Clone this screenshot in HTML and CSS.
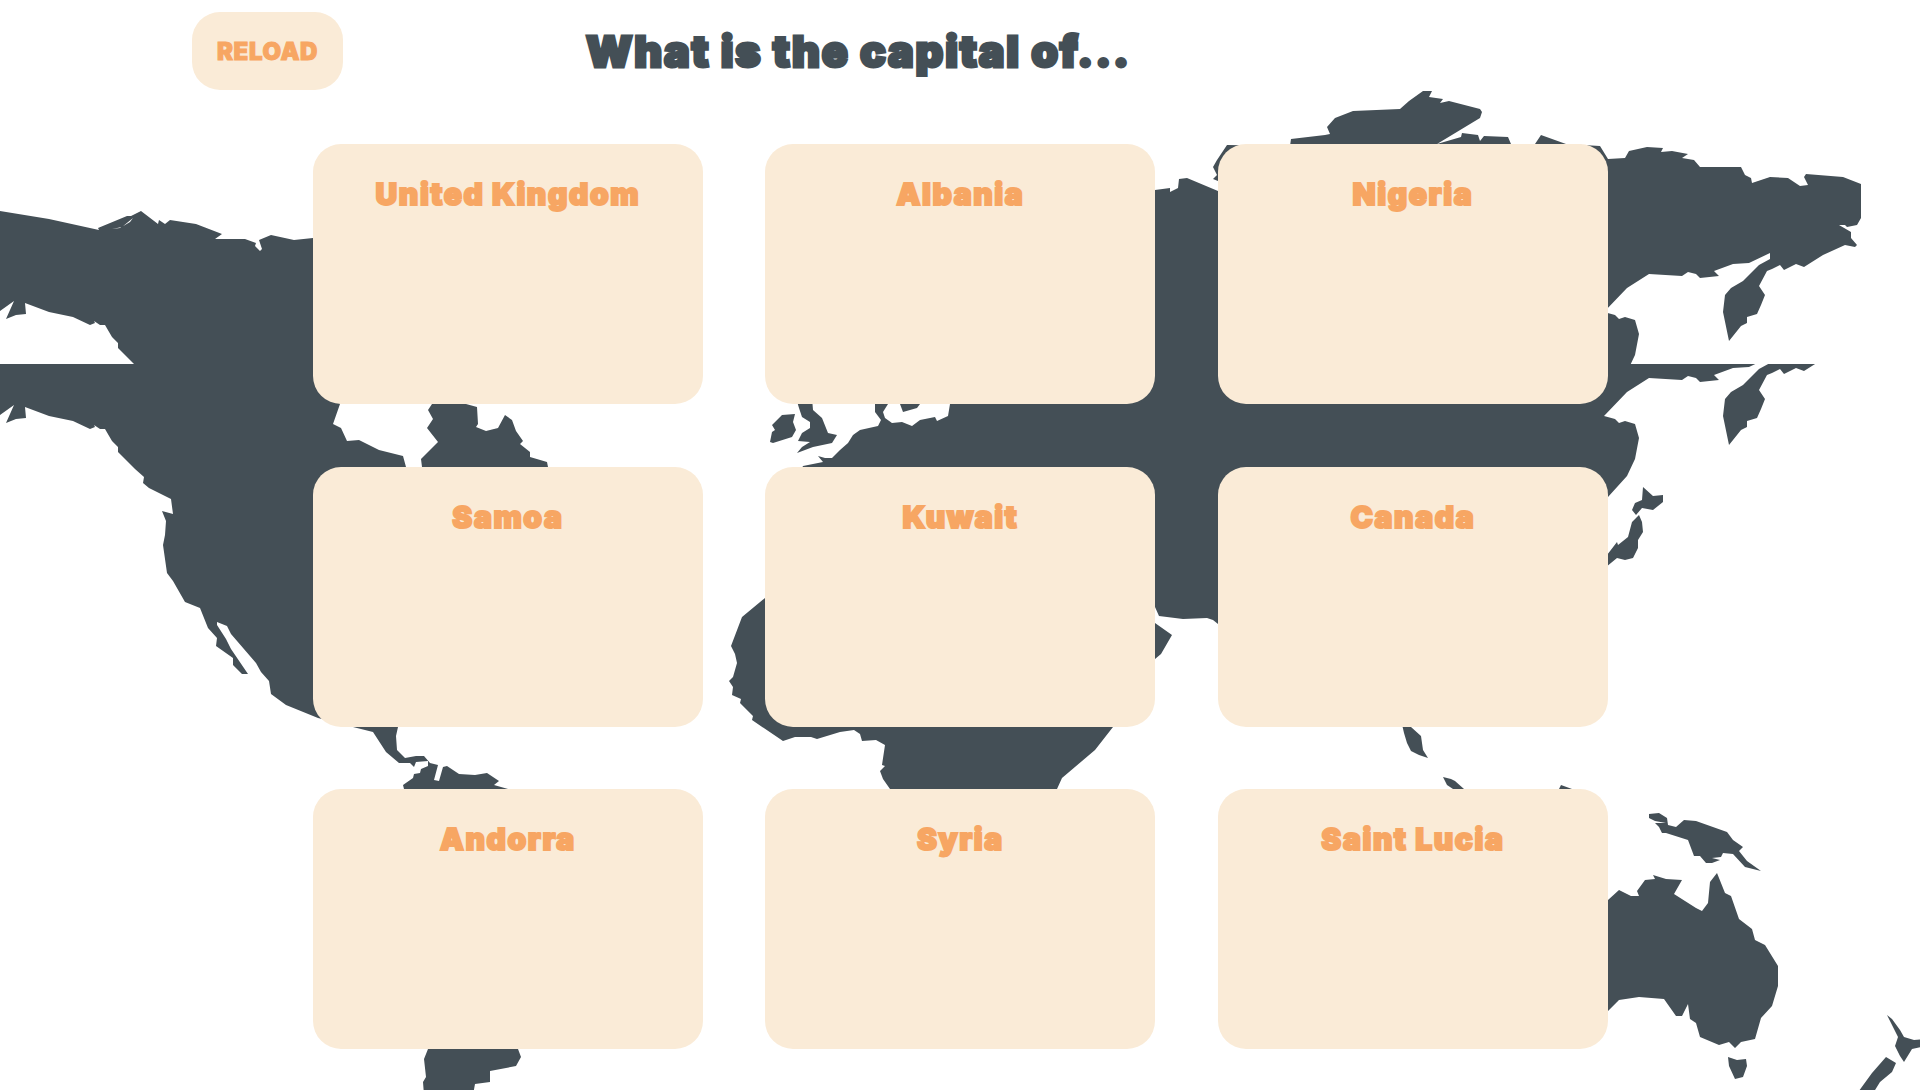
FILE: index.html
```html
<!DOCTYPE html>
<html lang="en">
<head>
  <meta charset="UTF-8" />
  <title>Capitals Quiz</title>
  <meta name="viewport" content="width=device-width, initial-scale=1.0" />
  <link rel="stylesheet" href="styles.css">
</head>
<body>
  <svg class="map" width="1920" height="1090" viewBox="0 0 1920 1090" aria-hidden="true">
    <defs>
      <clipPath id="tileTop"><rect x="0" y="0" width="1861" height="364" /></clipPath>
      <clipPath id="tileBottom"><rect x="0" y="364" width="1920" height="726" /></clipPath>
      <g id="land">
        <path fill-rule="evenodd" d="M0 315 49 323 99 334 98 332 127 320 131 320 141 315 158 328 159 324 165 328 170 324 196 328 222 338 215 343 245 343 256 347 255 350 260 355 262 353 259 344 271 339 294 344 313 342 330 380 340 404 333 424 341 428 347 441 359 440 379 450 403 456 406 467 414 480 422 467 421 459 438 442 427 428 433 419 428 410 432 404 432 390 466 390 466 404 477 407 478 424 476 427 486 431 498 428 505 415 512 420 516 431 523 441 520 444 530 452 530 457 547 462 548 467 540 600 420 700 398 727 396 736 397 750 405 758 416 756 424 756 430 763 438 765 434 780 439 781 443 767 447 766 459 774 475 775 487 773 499 781 494 785 508 789 518 1049 521 1057 516 1066 490 1071 490 1082 475 1084 473 1095 424 1095 423 1082 426 1077 424 1059 428 1049 404 789 403 785 413 778 414 774 420 773 421 769 428 766 428 761 416 762 414 767 410 763 399 763 386 752 373 732 353 727 318 718 286 705 271 694 269 681 261 672 256 663 231 634 227 626 217 622 217 625 226 639 231 649 248 674 242 674 233 665 233 658 216 646 217 638 208 628 200 608 185 602 173 581 167 573 163 545 165 535 166 521 162 511 173 514 171 499 149 488 143 483 144 477 135 469 118 452 118 447 112 441 105 429 100 429 94 425 95 427 90 429 73 421 49 416 25 407 26 418 16 419 6 423 14 405 0 415Z M112 333 122 331 133 322 130 326 120 332Z" />
        <path d="M765 598 742 617 731 646 735 654 737 663 733 677 729 681 733 687 732 695 741 699 740 703 753 716 752 720 783 741 795 737 811 737 817 739 840 732 854 730 860 734 862 741 876 740 885 745 882 765 885 766 880 771 883 779 890 789 1057 789 1062 778 1095 750 1113 727 1140 665 1155 659 1161 654 1172 635 1155 623 1145 618 1155 607 1159 616 1183 619 1207 618 1213 620 1218 624 1500 700 1600 510 1608 497 1627 476 1635 459 1639 438 1635 424 1625 421 1619 423 1615 419 1604 416 1627 392 1649 378 1682 380 1688 376 1696 378 1700 382 1719 380 1714 375 1733 368 1749 367 1770 357 1770 363 1759 369 1743 385 1731 392 1725 399 1723 416 1729 445 1741 430 1747 427 1747 421 1757 418 1761 409 1765 399 1759 390 1767 375 1772 373 1780 369 1784 374 1796 368 1804 371 1823 359 1845 349 1855 351 1857 349 1851 342 1851 336 1839 329 1845 329 1847 331 1857 329 1861 322 1861 288 1843 281 1806 278 1804 281 1808 289 1800 290 1788 282 1770 281 1752 287 1751 282 1745 279 1741 271 1700 271 1694 264 1682 262 1688 258 1672 255 1661 256 1663 252 1647 251 1629 255 1625 262 1608 263 1600 250 1566 248 1541 239 1535 248 1511 248 1508 241 1484 240 1480 245 1478 239 1462 237 1461 241 1437 248 1480 222 1482 216 1480 213 1449 205 1440 207 1443 203 1429 201 1432 195 1423 195 1409 205 1400 213 1353 215 1335 222 1327 231 1330 238 1325 239 1291 243 1290 250 1227 249 1217 264 1213 271 1217 279 1213 283 1218 285 1225 295 1218 295 1187 282 1179 283 1178 292 1170 296 1170 292 1155 294 1000 330 950 395 950 404 948 416 937 421 935 417 920 420 912 426 902 422 892 423 885 418 883 412 888 404 885 395 875 395 875 404 875 412 881 420 878 426 860 430 853 435 848 443 840 450 832 458 825 458 818 456 823 462 803 466 802 468 790 480 770 560Z" />
        <path d="M900 395 920 395 920 404 917 408 903 412 900 404Z" />
        <path d="M796 398 812 398 813 410 822 418 828 433 837 435 832 443 813 447 797 453 802 447 810 442 798 441 802 433 810 428 810 422 802 417 799 408Z" />
        <path d="M770 442 772 432 775 430 772 425 782 415 795 414 793 422 796 430 792 437 773 443Z" />
        <path d="M1643 487 1653 496 1663 495 1663 502 1653 510 1642 508 1636 515 1632 510 1635 503 1642 500Z" />
        <path d="M1639 515 1642 522 1643 532 1638 540 1638 548 1633 558 1625 560 1617 558 1600 572 1600 560 1607 555 1617 542 1618 545 1628 537 1632 522 1637 517Z" />
        <path d="M1401 720 1411 720 1411 727 1421 736 1423 750 1428 758 1419 755 1411 751 1407 743 1404 733Z" />
        <path d="M1443 777 1451 779 1455 781 1464 789 1464 795 1453 795 1453 789 1447 785Z" />
        <path d="M1561 785 1572 789 1572 795 1559 795 1559 789Z" />
        <path d="M1649 814 1659 813 1667 818 1668 825 1676 827 1684 820 1696 821 1727 832 1733 840 1743 847 1739 851 1747 861 1761 871 1745 867 1733 854 1723 853 1721 857 1712 858 1720 860 1712 863 1706 863 1700 856 1694 856 1688 840 1666 833 1662 833 1659 827 1655 823 1666 823 1655 821 1649 818Z" />
        <path d="M1500 900 1608 900 1619 890 1631 896 1639 896 1637 891 1645 880 1655 879 1653 875 1666 879 1682 880 1674 894 1696 908 1702 911 1708 903 1710 882 1717 873 1725 893 1731 896 1739 919 1752 929 1755 940 1765 945 1778 966 1778 986 1772 1006 1761 1018 1755 1039 1741 1042 1735 1048 1729 1042 1719 1045 1700 1037 1696 1023 1690 1019 1688 1004 1682 1016 1676 1016 1664 999 1639 997 1619 1000 1608 1011 1500 1000Z" />
        <path d="M1728 1057 1737 1060 1746 1059 1747 1066 1743 1077 1735 1079 1729 1066Z" />
        <path d="M1887 1015 1892 1019 1900 1030 1904 1037 1914 1040 1925 1039 1925 1046 1912 1049 1904 1062 1900 1056 1895 1046 1898 1037 1890 1021Z" />
        <path d="M1886 1057 1896 1063 1892 1072 1880 1082 1872 1095 1856 1095 1872 1073Z" />
      </g>
    </defs>
    <g clip-path="url(#tileTop)"><use href="#land" y="-104" /></g>
    <g clip-path="url(#tileBottom)"><use href="#land" /></g>
  </svg>

  <header class="top">
    <button class="reload">RELOAD</button>
    <h1>What is the capital of...</h1>
  </header>

  <main class="cards">
    <div class="card"><h2>United Kingdom</h2></div>
    <div class="card"><h2>Albania</h2></div>
    <div class="card"><h2>Nigeria</h2></div>
    <div class="card"><h2>Samoa</h2></div>
    <div class="card"><h2>Kuwait</h2></div>
    <div class="card"><h2>Canada</h2></div>
    <div class="card"><h2>Andorra</h2></div>
    <div class="card"><h2>Syria</h2></div>
    <div class="card"><h2>Saint Lucia</h2></div>
  </main>
</body>
</html>
```

FILE: styles.css
```css
html, body {
  height: 1090px;
  overflow: hidden;
}
body {
  font-family: 'Inter', 'Liberation Sans', sans-serif;
  background-color: #ffffff;
  color: #444f56;
  margin: 0;
  padding: 0;
  position: relative;
}
.map {
  position: absolute;
  top: 0;
  left: 0;
  fill: #444f56;
}
.top {
  position: relative;
  display: flex;
  align-items: center;
  height: 78px;
  padding: 12px 0 0 192px;
}
.reload {
  width: 151px;
  height: 78px;
  margin-right: 243px;
  border: none;
  border-radius: 28px;
  background-color: #faebd7;
  color: #f7a663;
  font-family: inherit;
  font-size: 24px;
  font-weight: 900;
  letter-spacing: 0.6px;
  -webkit-text-stroke: 1px #f7a663;
  cursor: pointer;
}
.top h1 {
  margin: 0;
  font-size: 43px;
  font-weight: 900;
  letter-spacing: 1.8px;
  -webkit-text-stroke: 3px #444f56;
}
.cards {
  position: relative;
  display: grid;
  grid-template-columns: repeat(3, 390px);
  grid-auto-rows: 260px;
  column-gap: 62.5px;
  row-gap: 62.5px;
  margin: 54px 0 0 312.9px;
}
.card {
  background-color: #faebd7;
  border-radius: 28px;
  text-align: center;
}
.card h2 {
  margin: 0;
  padding-top: 32px;
  font-size: 30px;
  font-weight: 900;
  letter-spacing: 1.6px;
  color: #f7a663;
  -webkit-text-stroke: 2px #f7a663;
}
```
